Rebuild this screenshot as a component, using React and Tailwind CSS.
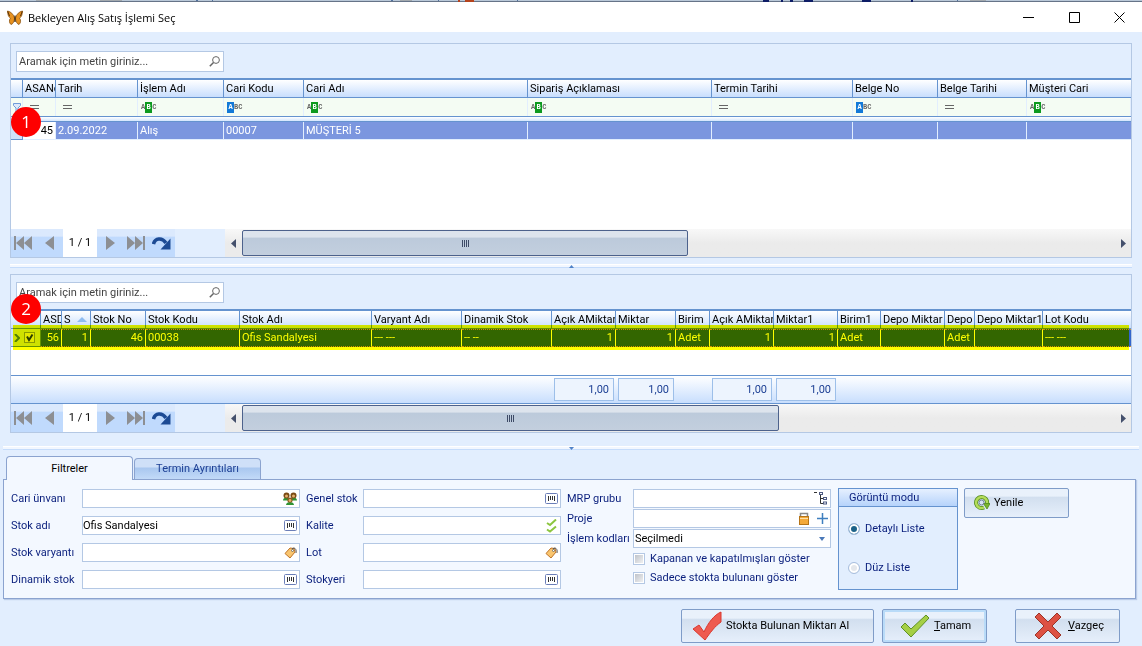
import React, { useState } from "react";
import clsx from "clsx";

const orderColumns = [
  { title: "", width: 12, filter: "funnel" },
  { title: "ASANo", width: 33, filter: "equal" },
  { title: "Tarih", width: 82, filter: "equal" },
  { title: "İşlem Adı", width: 86, filter: "contains" },
  { title: "Cari Kodu", width: 80, filter: "starts" },
  { title: "Cari Adı", width: 224, filter: "contains" },
  { title: "Sipariş Açıklaması", width: 184, filter: "contains" },
  { title: "Termin Tarihi", width: 141, filter: "equal" },
  { title: "Belge No", width: 85, filter: "starts" },
  { title: "Belge Tarihi", width: 89, filter: "equal" },
  { title: "Müşteri Cari", filter: "contains" },
];

const orderRow = ["", "45", "2.09.2022", "Alış", "00007", "MÜŞTERİ 5", "", "", "", "", ""];

const stockColumns = [
  { title: "ASD", width: 21, value: "56", right: true },
  { title: "S", width: 29, value: "1", right: true, sorted: true },
  { title: "Stok No", width: 55, value: "46", right: true },
  { title: "Stok Kodu", width: 94, value: "00038" },
  { title: "Stok Adı", width: 132, value: "Ofis Sandalyesi" },
  { title: "Varyant Adı", width: 90, value: "--- ---" },
  { title: "Dinamik Stok", width: 90, value: "-- --" },
  { title: "Açık AMiktar", width: 64, value: "1", right: true, total: "1,00" },
  { title: "Miktar", width: 60, value: "1", right: true, total: "1,00" },
  { title: "Birim", width: 34, value: "Adet" },
  { title: "Açık AMiktar", width: 64, value: "1", right: true, total: "1,00" },
  { title: "Miktar1", width: 64, value: "1", right: true, total: "1,00" },
  { title: "Birim1", width: 43, value: "Adet" },
  { title: "Depo Miktar", width: 64, value: "" },
  { title: "Depo", width: 30, value: "Adet" },
  { title: "Depo Miktar1", width: 68, value: "" },
  { title: "Lot Kodu", value: "--- ---" },
];

function Butterfly() {
  return (
    <svg width="16" height="16" viewBox="0 0 16 16">
      <path d="M7.500 8C6.500 4 3.500 1.500.5 1c.2 3.500 1 6 3 7.200C2 9.500 2 13 4 14.500 6 14 7.200 11.500 7.500 9Z" fill="#e8921e" stroke="#8a5210" strokeWidth=".8" />
      <path d="M8.500 8C9.500 4 12.500 1.500 15.500 1c-.2 3.500-1 6-3 7.200 1.500 1.300 1.500 4.800-.5 6.300C10 14 8.800 11.500 8.500 9Z" fill="#e8921e" stroke="#8a5210" strokeWidth=".8" />
      <path d="M8 5.500V12" stroke="#3a2208" strokeWidth="1.200" />
      <path d="M.8 1.500 2.500 6M15.200 1.500 13.500 6" stroke="#5a3208" />
    </svg>
  );
}

function SearchBox({ label }) {
  return (
    <div className="flex h-[21px] w-[208px] items-center border border-[#b4c8e4] bg-white pr-[3px]">
      <input
        type="text"
        aria-label={label}
        placeholder="Aramak için metin giriniz..."
        className="min-w-0 flex-1 px-0.5 text-[#333] outline-none placeholder:text-[#444]"
      />
      <svg width="11" height="11" viewBox="0 0 11 11" fill="none" stroke="#666">
        <circle cx="7" cy="4" r="3.400" />
        <path d="M4.500 6.500.8 10.200" strokeWidth="1.500" />
      </svg>
    </div>
  );
}

function FilterIcon({ type }) {
  if (type === "funnel") {
    return (
      <svg width="8" height="11" viewBox="0 0 8 11" fill="#dbe9fb" stroke="#6f9bd8">
        <path d="M.5 1.500h7v2L5 6v4H3V6L.5 3.500Z" />
      </svg>
    );
  }
  if (type === "equal") {
    return <div className="ml-[5px] h-1 w-[9px] border-y border-[#666]" />;
  }
  const chip = "flex h-[11px] w-[7px] items-center justify-center text-white";
  return (
    <div className="ml-px flex items-center font-['Liberation_Mono',monospace] text-[7px] leading-none font-bold text-[#666]">
      <span className={type === "starts" ? clsx(chip, "bg-[#1279d8]") : undefined}>A</span>
      <span className={type === "contains" ? clsx(chip, "bg-[#0c9a1e]") : undefined}>B</span>
      <span>C</span>
    </div>
  );
}

function Columns({ items }) {
  return (
    <colgroup>
      {items.map((c, i) => (
        <col key={i} style={{ width: c.width }} />
      ))}
    </colgroup>
  );
}

function NavButton({ label, width, children }) {
  return (
    <button aria-label={label} className={clsx("flex items-center justify-center", width)}>
      {children}
    </button>
  );
}

function Navigator({ thumb }) {
  return (
    <div className="flex h-7">
      <div className="flex w-[164px] bg-linear-to-b from-[#dbe9fd] from-25% to-[#c0dafd] to-30%">
        <NavButton label="İlk" width="w-[25px]">
          <svg width="19" height="14" viewBox="0 0 19 14" fill="#8d8f93">
            <path d="M0 0h2v14H0zM10 0v14L2 7zM18 0v14l-8-7z" />
          </svg>
        </NavButton>
        <NavButton label="Önceki" width="w-[27px]">
          <svg width="9" height="14" viewBox="0 0 9 14" fill="#8d8f93">
            <path d="M9 0v14L0 7z" />
          </svg>
        </NavButton>
        <span className="flex w-[34px] items-center justify-center bg-white text-black">1 / 1</span>
        <NavButton label="Sonraki" width="w-[26px]">
          <svg width="9" height="14" viewBox="0 0 9 14" fill="#8d8f93">
            <path d="M0 0v14l9-7z" />
          </svg>
        </NavButton>
        <NavButton label="Son" width="w-[25px]">
          <svg width="19" height="14" viewBox="0 0 19 14" fill="#8d8f93">
            <path d="M1 0v14l8-7zM9 0v14l8-7zM17 0h2v14h-2z" />
          </svg>
        </NavButton>
        <NavButton label="Git" width="w-[27px]">
          <svg width="19" height="13" viewBox="0 0 19 13">
            <path d="M1.500 7C3 1 10 0 14 6" fill="none" stroke="#1c4a94" strokeWidth="3.500" />
            <path d="M18.500 1.500v11H8.500Z" fill="#1c4a94" />
          </svg>
        </NavButton>
      </div>
      <div className="w-[50px]" />
      <div className="flex flex-1 bg-linear-to-b from-[#f8f8f8] to-[#ebebeb] to-50%">
        <button aria-label="Sola kaydır" className="flex w-[17px] items-center justify-center">
          <svg width="5" height="9" viewBox="0 0 5 9" fill="#44506c">
            <path d="M5 0v9L0 4.500z" />
          </svg>
        </button>
        <div className="flex-1 py-px">
          <div
            style={{ width: thumb }}
            className="flex h-full items-center justify-center gap-px rounded-xs border border-[#4d628c] bg-linear-to-b from-[#dde4ed] from-25% via-[#bccadb] via-30% to-[#c3cfde]"
          >
            {[0, 1, 2, 3].map((n) => (
              <span key={n} className="h-[7px] w-px bg-[#3d4a66]" />
            ))}
          </div>
        </div>
        <button aria-label="Sağa kaydır" className="flex w-4 items-center justify-center">
          <svg width="5" height="9" viewBox="0 0 5 9" fill="#44506c">
            <path d="M0 0v9l5-4.500z" />
          </svg>
        </button>
      </div>
    </div>
  );
}

function Splitter({ down }) {
  return (
    <div className="flex h-1 justify-center border-t border-b border-t-white border-b-[#c5dcfb] bg-[#f2f7ff]">
      <svg width="5" height="3" viewBox="0 0 5 3" fill="#4f82c8">
        <path d={down ? "M0 0h5L2.500 3z" : "M0 3h5L2.500 0z"} />
      </svg>
    </div>
  );
}

function Marker({ children, className }) {
  return (
    <span
      className={clsx(
        "absolute flex size-[30px] items-center justify-center rounded-full bg-[#fe0000] font-['Open_Sans',sans-serif] text-[17px] text-white",
        className
      )}
    >
      {children}
    </span>
  );
}

const headCell =
  "h-[18px] overflow-hidden border-r border-b border-[#6593cf] bg-linear-to-b from-white to-[#c8defd] p-0 pl-0.5 text-left font-normal text-black last:border-r-0";

function OrderGrid() {
  return (
    <section className="relative border border-[#b4c8e4]">
      <div className="border-b-2 border-[#6593cf] px-[5px] pt-[7px] pb-[6px]">
        <SearchBox label="İşlemlerde ara" />
      </div>
      <div className="h-[149px] bg-white">
        <table className="w-full table-fixed border-separate border-spacing-0 whitespace-nowrap">
          <Columns items={orderColumns} />
          <thead>
            <tr>
              {orderColumns.map((c, i) => (
                <th key={i} className={headCell}>{c.title}</th>
              ))}
            </tr>
            <tr>
              {orderColumns.map((c, i) => (
                <td key={i} className="h-[18px] border-r border-[#e2eefe] bg-[#f4fcf3] p-0 pl-0.5">
                  <FilterIcon type={c.filter} />
                </td>
              ))}
            </tr>
            <tr>
              <td colSpan={11} className="h-1.5 border-y border-[#6593cf] bg-linear-to-b from-white to-[#d3e5fd] p-0" />
            </tr>
          </thead>
          <tbody>
            <tr>
              {orderRow.map((text, i) => (
                <td
                  key={i}
                  className={clsx(
                    "h-[18px] overflow-hidden border-r border-b p-0 last:border-r-0",
                    i === 0 && "border-[#6593cf] bg-[#cfe1fb]",
                    i > 0 && "border-[#e2eefe]",
                    i === 1 && "bg-white pr-0.5 text-right text-black",
                    i > 1 && "bg-[#7b96df] pl-0.5 text-white"
                  )}
                >
                  {text}
                </td>
              ))}
            </tr>
          </tbody>
        </table>
      </div>
      <Navigator thumb="51.1%" />
      <Marker className="top-[63px] left-0">1</Marker>
    </section>
  );
}

function StockGrid() {
  const [checked, setChecked] = useState(true);
  const columns = [{ width: 30 }, ...stockColumns];

  return (
    <section className="relative border border-[#b4c8e4]">
      <div className="border-b-2 border-[#6593cf] px-[5px] pt-[7px] pb-[6px]">
        <SearchBox label="Stoklarda ara" />
      </div>
      <div className="h-16 bg-white">
        <table className="w-full table-fixed border-separate border-spacing-0 whitespace-nowrap">
          <Columns items={columns} />
          <thead>
            <tr>
              <th className={headCell} />
              {stockColumns.map((c, i) => (
                <th key={i} className={headCell}>
                  {c.sorted ? (
                    <span className="flex items-center gap-1.5">
                      {c.title}
                      <svg width="10" height="5" viewBox="0 0 10 5" fill="#8fbcf0">
                        <path d="M0 5h10L5 0z" />
                      </svg>
                    </span>
                  ) : (
                    c.title
                  )}
                </th>
              ))}
            </tr>
          </thead>
          <tbody>
            <tr>
              <td className="h-[18px] border-r border-b border-[#6593cf] bg-[#cfe1fb] p-0">
                <div className="flex items-center gap-1 pl-[3px]">
                  <svg width="6" height="8" viewBox="0 0 6 8" fill="none" stroke="#4f7ec0" strokeWidth="2">
                    <path d="M1 0l4 4-4 4" />
                  </svg>
                  <label className="relative flex size-[11px]">
                    <input
                      type="checkbox"
                      aria-label="Satırı seç"
                      checked={checked}
                      onChange={() => setChecked(!checked)}
                      className="size-[11px] appearance-none border border-[#8a9cb8] bg-[#e4e8ee]"
                    />
                    {checked && (
                      <svg className="absolute inset-0" width="11" height="11" viewBox="0 0 11 11" fill="none" stroke="#2b3f66" strokeWidth="2">
                        <path d="M3 4.500l2 3.500 3.500-5.500" />
                      </svg>
                    )}
                  </label>
                </div>
              </td>
              {stockColumns.map((c, i) => (
                <td
                  key={i}
                  className={clsx(
                    "h-[18px] border-y border-r border-y-[#d09030] border-r-white [border-top-style:dotted] [border-bottom-style:dotted] bg-[#3366cc] p-0 text-white last:border-r-0",
                    c.right ? "pr-0.5 text-right" : "pl-0.5"
                  )}
                >
                  {c.value}
                </td>
              ))}
            </tr>
          </tbody>
        </table>
      </div>
      <table className="w-full table-fixed border-separate border-spacing-0 border-y border-[#6593cf] bg-linear-to-b from-white to-[#c8defd]">
        <Columns items={columns} />
        <tbody>
          <tr>
            {columns.map((c, i) => (
              <td key={i} className="h-[27px] p-0 pr-0.5 pl-0.5">
                {c.total && (
                  <div className="flex h-[23px] items-center justify-end border border-[#9dbfe9] bg-[#edf4fe] pr-1 text-[#1c3f94]">
                    {c.total}
                  </div>
                )}
              </td>
            ))}
          </tr>
        </tbody>
      </table>
      <Navigator thumb="61.5%" />
      <div className="pointer-events-none absolute top-[50px] right-0.5 left-0.5 h-[25px] bg-[#ffff00] mix-blend-multiply" />
      <Marker className="top-[19px] left-0">2</Marker>
    </section>
  );
}

function BarcodeIcon() {
  return (
    <svg width="13" height="11" viewBox="0 0 13 11">
      <rect x=".5" y=".5" width="12" height="10" rx="1" fill="#fff" stroke="#6c7fb8" />
      <path d="M3.500 3v5M5.500 3v4M7.500 3v4M9.500 3v5" stroke="#333" />
    </svg>
  );
}

function TagIcon() {
  return (
    <svg width="13" height="13" viewBox="0 0 13 13">
      <path d="M1 7.500 6 2l4 .5 1 3.500-5 6Z" fill="#f9c56e" stroke="#c07428" />
      <circle cx="8.500" cy="4.500" r="1" fill="#fff" stroke="#555" strokeWidth=".7" />
      <path d="M8 3C10 .5 13 3 12 7" fill="none" stroke="#555" />
    </svg>
  );
}

function PeopleIcon() {
  return (
    <svg width="14" height="13" viewBox="0 0 14 13">
      <path d="M0 8.500c0-4 6.500-4 6.500 0zM7.500 8.500c0-4 6.500-4 6.500 0zM3 13c0-4 8-4 8 0z" fill="#2f9434" />
      <circle cx="3.500" cy="3.500" r="3" fill="#7a4a14" />
      <circle cx="10.500" cy="3.500" r="3" fill="#7a4a14" />
      <circle cx="7" cy="8" r="2.600" fill="#8b571c" />
      <circle cx="3.500" cy="4" r="1.500" fill="#e2b06c" />
      <circle cx="10.500" cy="4" r="1.500" fill="#e2b06c" />
      <circle cx="7" cy="8.500" r="1.400" fill="#e2b06c" />
    </svg>
  );
}

function QualityIcon() {
  return (
    <svg width="12" height="14" viewBox="0 0 12 14" fill="none" stroke="#8cc63f" strokeWidth="2">
      <path d="M1 4l3 2 6-5.500M1 10.500 4 12.500l6-5" />
    </svg>
  );
}

function TreeIcon() {
  return (
    <svg width="14" height="13" viewBox="0 0 14 13" fill="none" stroke="#4d5a82">
      <path d="M0 .5h3" stroke="#333" />
      <path d="M6.500 2v9.500H9M6.500 6.500H9" stroke="#333" />
      <rect x="5.500" y=".5" width="3" height="2" fill="#fff" />
      <rect x="9.500" y="5.500" width="3" height="2" fill="#fff" />
      <rect x="9.500" y="10" width="3" height="2" fill="#fff" />
    </svg>
  );
}

function LockIcon() {
  return (
    <svg width="10" height="13" viewBox="0 0 10 13">
      <path d="M1.500 5V1.500h7V5" fill="#fff" stroke="#888" strokeWidth="1.500" />
      <rect x=".5" y="4.500" width="9" height="8" fill="#f3a93a" stroke="#b57418" />
      <path d="M1 6.500h8" stroke="#fde0a8" />
    </svg>
  );
}

function Field({ id, label, value = "", children }) {
  return (
    <>
      <label htmlFor={id}>{label}</label>
      <div className="flex h-[19px] items-center gap-2 border border-[#b4c8e4] bg-white pr-0.5">
        <input id={id} type="text" defaultValue={value} className="h-full min-w-0 flex-1 text-black outline-none" />
        {children}
      </div>
    </>
  );
}

function CheckOption({ label }) {
  return (
    <label className="flex h-[19px] items-center gap-[5px] whitespace-nowrap">
      <input
        type="checkbox"
        className="size-3 shrink-0 appearance-none border border-[#b4c8e4] bg-linear-to-br from-[#b9bec6] to-[#f6f6f6] inset-ring inset-ring-white checked:bg-[#2b5797]"
      />
      {label}
    </label>
  );
}

function RadioOption({ label, checked, onChange }) {
  return (
    <label className="flex items-center gap-[5px]">
      <input
        type="radio"
        name="view"
        checked={checked}
        onChange={onChange}
        className="size-3 appearance-none rounded-full border border-[#a8bfdf] bg-[#e4e7ec] inset-ring-2 inset-ring-white checked:bg-[#1c6288]"
      />
      {label}
    </label>
  );
}

function Filters() {
  const [view, setView] = useState("detail");

  return (
    <div className="flex items-start gap-1.5 border border-[#8ba3cf] bg-[#f3f8ff] px-[7px] pt-2 pb-2 text-[#0a1f7d] shadow-[1px_1px_1px_#b9cbe8]">
      <div className="grid grid-cols-[71px_218px] items-center gap-y-2 pt-px">
        <Field id="cari" label="Cari ünvanı"><PeopleIcon /></Field>
        <Field id="stok" label="Stok adı" value="Ofis Sandalyesi"><BarcodeIcon /></Field>
        <Field id="varyant" label="Stok varyantı"><TagIcon /></Field>
        <Field id="dinamik" label="Dinamik stok"><BarcodeIcon /></Field>
      </div>
      <div className="grid grid-cols-[57px_198px] items-center gap-y-2 pt-px">
        <Field id="genel" label="Genel stok"><BarcodeIcon /></Field>
        <Field id="kalite" label="Kalite"><QualityIcon /></Field>
        <Field id="lot" label="Lot"><TagIcon /></Field>
        <Field id="yer" label="Stokyeri"><BarcodeIcon /></Field>
      </div>
      <div className="grid grid-cols-[66px_198px] items-center gap-y-px pt-px whitespace-nowrap">
        <Field id="mrp" label="MRP grubu"><TreeIcon /></Field>
        <Field id="proje" label="Proje">
          <LockIcon />
          <svg width="11" height="11" viewBox="0 0 11 11" stroke="#3f7fbf" strokeWidth="1.500">
            <path d="M5.500 0v11M0 5.500h11" />
          </svg>
        </Field>
        <label htmlFor="kod">İşlem kodları</label>
        <div className="relative">
          <select id="kod" className="h-[19px] w-full appearance-none border border-[#b4c8e4] bg-white pl-px text-black">
            <option>Seçilmedi</option>
          </select>
          <svg className="absolute top-2 right-[6px]" width="6" height="4" viewBox="0 0 6 4" fill="#4a78b8">
            <path d="M0 0h6L3 4z" />
          </svg>
        </div>
        <div className="col-start-2">
          <CheckOption label="Kapanan ve kapatılmışları göster" />
          <CheckOption label="Sadece stokta bulunanı göster" />
        </div>
      </div>
      <div role="radiogroup" aria-labelledby="view-title" className="ml-px h-[102px] w-[120px] border border-[#6593cf] bg-[#e2eefe]">
        <div id="view-title" className="flex h-[18px] items-center border-b border-[#6593cf] bg-linear-to-b from-[#e6f0ff] to-[#b6d3fb] px-[10px]">
          Görüntü modu
        </div>
        <div className="flex flex-col gap-[25px] px-[9px] pt-[15px]">
          <RadioOption label="Detaylı Liste" checked={view === "detail"} onChange={() => setView("detail")} />
          <RadioOption label="Düz Liste" checked={view === "flat"} onChange={() => setView("flat")} />
        </div>
      </div>
      <button className={clsx(buttonStyle, "h-[30px] w-[105px] gap-1 pl-[9px]")}>
        <svg width="16" height="16" viewBox="0 0 16 16" fill="none">
          <path d="M10 12.500A5.500 5.500 0 1 1 13 8.500" stroke="#4f8a1a" strokeWidth="4" />
          <path d="M10 12.500A5.500 5.500 0 1 1 13 8.500" stroke="#b4dc5a" strokeWidth="2.500" />
          <path d="M9.500 8.500H16l-3 5.500z" fill="#7ab52c" stroke="#4f8a1a" strokeWidth=".8" />
          <circle cx="7.500" cy="7.500" r="2.500" stroke="#6d7f94" />
        </svg>
        Yenile
      </button>
    </div>
  );
}

const buttonStyle =
  "flex items-center rounded-xs border border-[#7f9cc8] bg-linear-to-b from-[#e9f1fb] from-25% via-[#d2dfef] via-30% to-[#e6effb] text-black";

export default function App() {
  return (
    <div className="min-h-screen bg-[#e2eefe] font-['Roboto','Noto_Sans',sans-serif] text-[11px] leading-[14px]">
      <svg className="block w-full" height="3" viewBox="0 0 1142 3" preserveAspectRatio="none">
        <path d="M0 0h1142v3H0z" fill="#b9c8d8" />
        <path d="M0 1h1142v1H0z" fill="#667488" />
        <path d="M0 2h1142v1H0z" fill="#fff" />
        <path d="M36 0h24v1H36zM100 0h22v1h-22zM400 0h12v1h-12zM970 0h16v1h-16z" fill="#a3a9ae" />
        <path d="M196 0h2v1h-2zM212 0h1v1h-1zM391 0h2v1h-2zM438 0h1v1h-1zM517 0h1v1h-1zM957 0h1v1h-1z" fill="#52719f" />
        <path d="M458 0h2v2h-2zM465 0h9v2h-9z" fill="#b5431c" />
        <path d="M763 0h6v2h-6zM781 0h2v2h-2zM790 0h3v2h-3zM804 0h9v2h-9zM862 0h9v2h-9zM911 0h2v2h-2z" fill="#0d1c66" />
      </svg>
      <header className="flex h-[29px] items-center bg-white pl-[7px]">
        <Butterfly />
        <h1 className="flex-1 pl-[5px] font-['Open_Sans','Noto_Sans',sans-serif] text-[11px] text-black">
          Bekleyen Alış Satış İşlemi Seç
        </h1>
        <div className="flex pr-px">
          <button aria-label="Simge durumuna küçült" className="flex w-[45px] justify-center">
            <svg width="11" height="11" viewBox="0 0 11 11" stroke="#000"><path d="M0 5.500h11" /></svg>
          </button>
          <button aria-label="Ekranı kapla" className="flex w-[46px] justify-center">
            <svg width="11" height="11" viewBox="0 0 11 11" fill="none" stroke="#000"><path d="M.5.5h10v10H.5z" /></svg>
          </button>
          <button aria-label="Kapat" className="flex w-[44px] justify-center">
            <svg width="11" height="11" viewBox="0 0 11 11" stroke="#000"><path d="M.5.5l10 10M10.500.5l-10 10" /></svg>
          </button>
        </div>
      </header>

      <main className="px-[10px] pt-[11px]">
        <OrderGrid />
        <div className="py-[6px]">
          <Splitter />
        </div>
        <StockGrid />
      </main>

      <div className="px-[3px] pt-[13px]">
        <Splitter down />
        <div className="flex items-end gap-px pt-1.5 pl-[3px]" role="tablist">
          <button role="tab" aria-selected="true" className="relative -mb-px h-6 w-[127px] rounded-t-sm border border-b-0 border-[#8ba3cf] bg-[#f3f8ff] text-black">
            Filtreler
          </button>
          <button role="tab" aria-selected="false" className="h-[21px] w-[127px] rounded-t-sm border border-b-0 border-[#8ba3cf] bg-linear-to-b from-[#cfe0f8] from-40% via-[#a9c7ef] via-45% to-[#c2daf8] text-[#1c3f94]">
            Termin Ayrıntıları
          </button>
        </div>
        <div className="pr-[3px]">
          <Filters />
        </div>
      </div>

      <footer className="flex justify-end gap-2 pt-[10px] pr-[22px]">
        <button className={clsx(buttonStyle, "h-[34px] w-[193px] gap-1 pl-[10px]")}>
          <svg width="30" height="30" viewBox="0 0 30 30">
            <path d="M1 18 7 14l5 7C16 12 22 4 29 1v10C23 15 18 22 13 29Z" fill="#ee5a50" stroke="#d9382f" />
          </svg>
          Stokta Bulunan Miktarı Al
        </button>
        <button className={clsx(buttonStyle, "h-[34px] w-[105px] gap-1 pl-[17px] inset-ring-2 inset-ring-[#b9dbf8]")}>
          <svg width="30" height="24" viewBox="0 0 30 24">
            <path d="M1 13l4-4 6 6L26 1l3 3-18 19Z" fill="#a5cf45" stroke="#5f9124" />
          </svg>
          <span><u>T</u>amam</span>
        </button>
        <button className={clsx(buttonStyle, "ml-5 h-[34px] w-[105px] gap-1.5 pl-[18px]")}>
          <svg width="28" height="28" viewBox="0 0 28 28">
            <path d="M1 5l4-4 9 9 9-9 4 4-9 9 9 9-4 4-9-9-9 9-4-4 9-9Z" fill="#dd5143" stroke="#9c3428" />
          </svg>
          <span><u>V</u>azgeç</span>
        </button>
      </footer>
    </div>
  );
}
